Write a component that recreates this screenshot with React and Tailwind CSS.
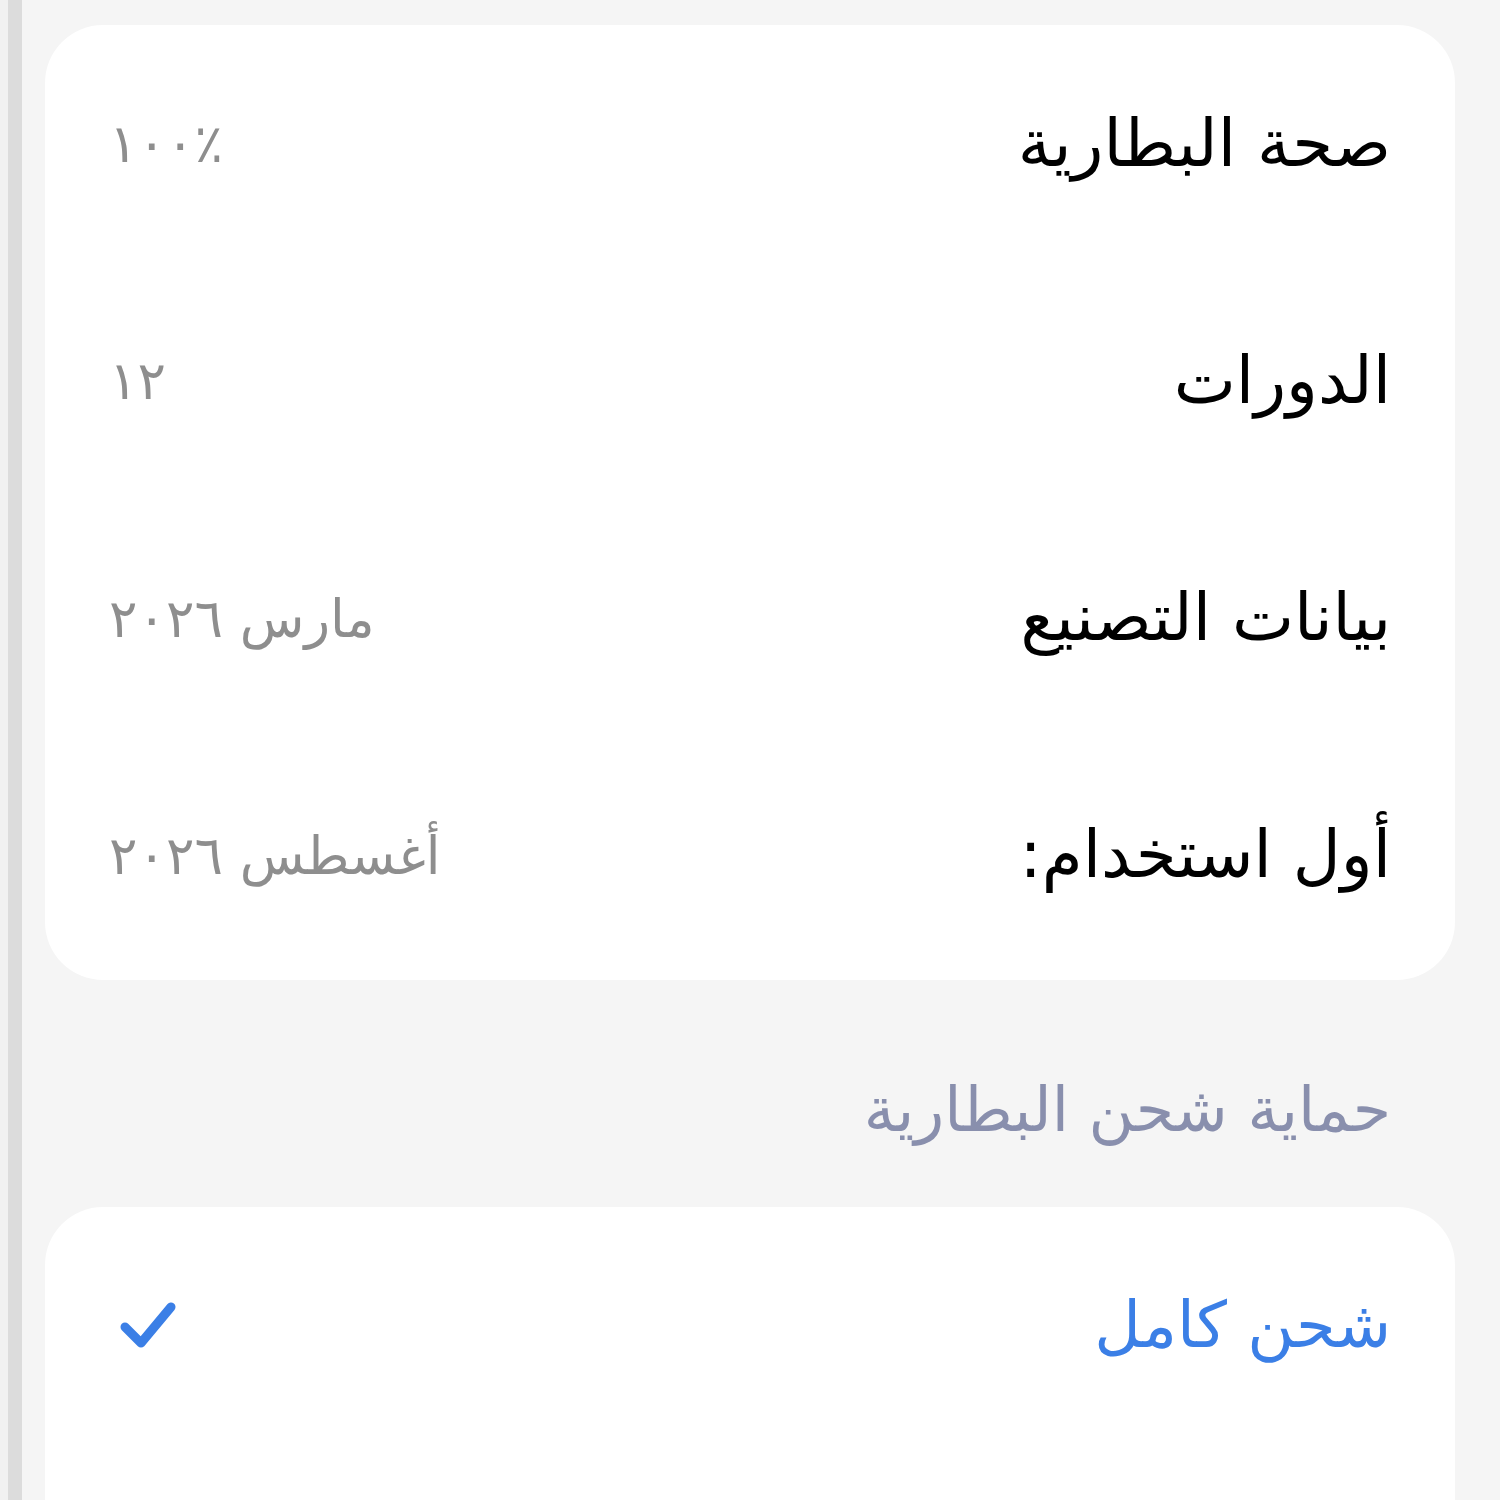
import React from "react";

const rows = [
  { label: "صحة البطارية", value: "١٠٠٪", valueDir: "ltr" },
  { label: "الدورات", value: "١٢", valueDir: "rtl" },
  { label: "بيانات التصنيع", value: "مارس ٢٠٢٦", valueDir: "rtl" },
  { label: "أول استخدام:", value: "أغسطس ٢٠٢٦", valueDir: "rtl" },
];

const font = { fontFamily: '"DejaVu Sans", "Noto Sans", sans-serif' };

function InfoRow({ label, value, valueDir }) {
  return (
    <div className="flex h-[240px] items-center justify-between px-[64px]">
      <span className="text-[66px] leading-none text-black">{label}</span>
      <span dir={valueDir} className="text-[53px] leading-none text-[#8e8e8e]">
        {value}
      </span>
    </div>
  );
}

export default function App() {
  return (
    <div
      className="flex min-h-[1500px] w-full bg-[#f5f5f5] overflow-hidden"
      style={font}
    >
      <div className="w-[8px] shrink-0 bg-[#f1f1f1]" />
      <div className="w-[14px] shrink-0 bg-[#dcdcdc]" />
      <div className="flex flex-1 flex-col pl-[23px] pr-[45px] pt-[25px]" dir="rtl">
        <div className="flex h-[955px] flex-col justify-center rounded-[58px] bg-white pb-[6px]">
          {rows.map((r) => (
            <InfoRow key={r.label} {...r} />
          ))}
        </div>
        <div className="flex h-[227px] items-center px-[64px] pt-[32px]">
          <span className="text-[62px] leading-none text-[#898fad]">
            حماية شحن البطارية
          </span>
        </div>
        <div className="flex h-[320px] flex-col rounded-t-[58px] bg-white">
          <div className="flex h-[236px] items-center justify-between px-[64px]">
            <span className="text-[64px] leading-none text-[#3b7fe6]">شحن كامل</span>
            <svg width="60" height="52" viewBox="0 0 60 52" className="ml-[10px]">
              <path
                d="M6 28 L22 44 L52 8"
                fill="none"
                stroke="#3b7fe6"
                strokeWidth="9"
                strokeLinecap="round"
                strokeLinejoin="round"
              />
            </svg>
          </div>
        </div>
      </div>
    </div>
  );
}
